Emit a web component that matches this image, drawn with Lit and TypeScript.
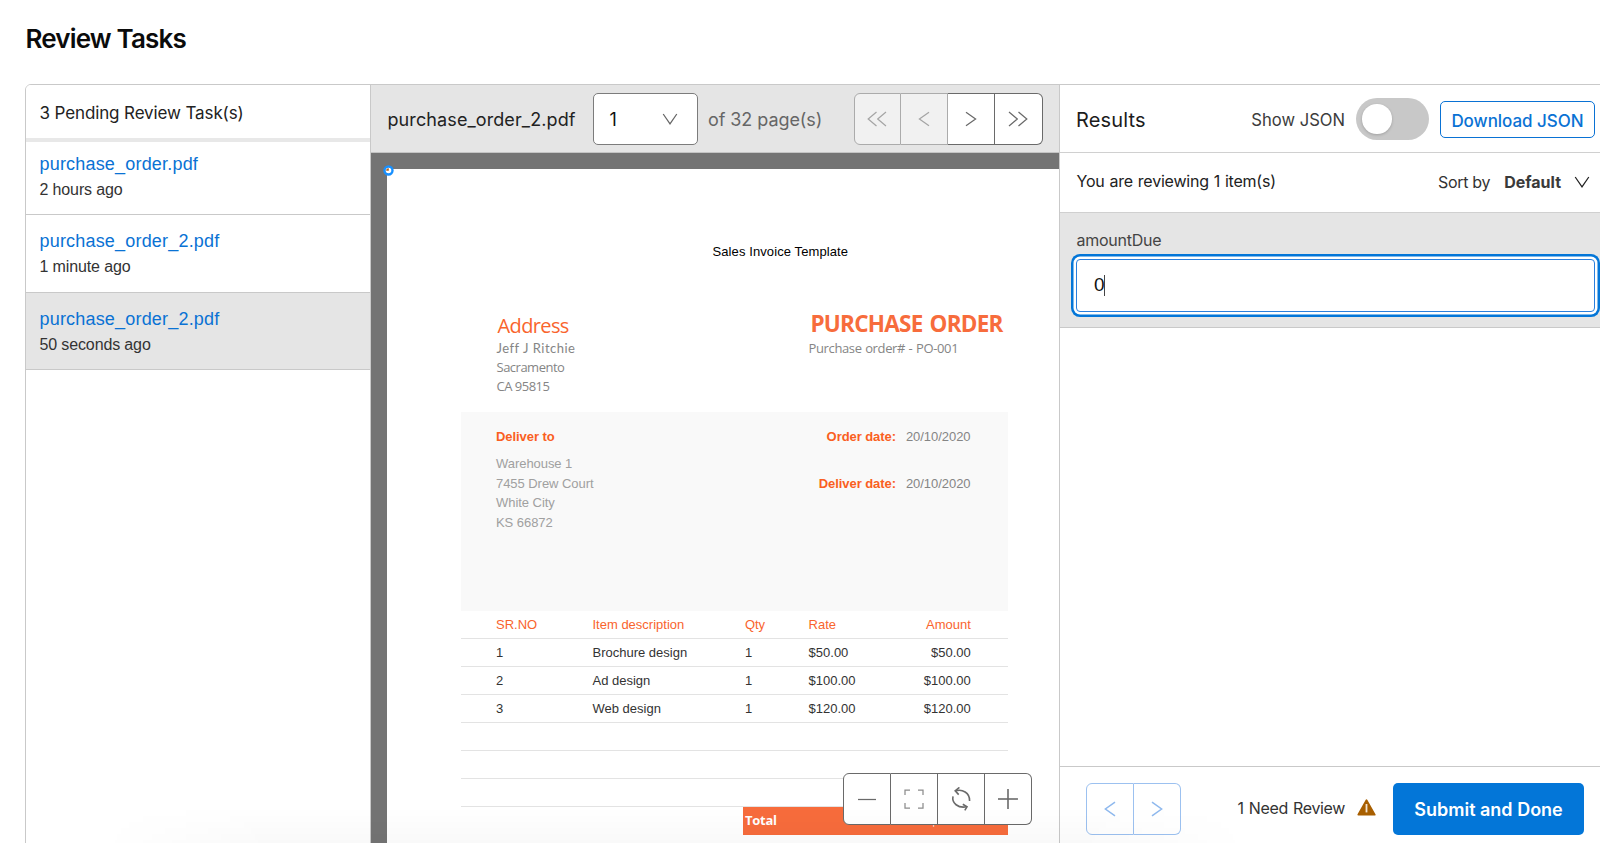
import { LitElement, html, css, svg } from "lit";
import { customElement, property, state } from "lit/decorators.js";
import { classMap } from "lit/directives/class-map.js";

const icon = (w: number, h: number, paths: string[], cls = "") => html`
  <svg class="icon ${cls}" width=${w} height=${h} viewBox="0 0 ${w} ${h}">
    ${paths.map((d) => svg`<path d=${d}></path>`)}
  </svg>`;

const ICONS = {
  first: () => icon(20, 16, ["M9.5 1 1.2 8 9.5 15", "M19 1 10.7 8 19 15"]),
  prev: () => icon(12, 16, ["M11 1.2 1.4 8 11 14.8"]),
  next: () => icon(12, 16, ["M1 1.2 10.6 8 1 14.8"]),
  last: () => icon(20, 16, ["M1 1 9.3 8 1 15", "M10.5 1 18.8 8 10.5 15"]),
  down: () => icon(16, 12, ["M1.2 1 8 10.8 14.8 1"]),
  minus: () => icon(20, 20, ["M1 10.5H19"]),
  fit: () => icon(20, 20, ["M1 6V1H6", "M14 1H19V6", "M19 14V19H14", "M6 19H1V14"], "light"),
  rotate: () =>
    icon(24, 24, [
      "M6.4 4C13 1.6 21 5.6 20.6 14",
      "M10.4.4 6.2 3.9 9.7 7.6",
      "M4 9.4C2.6 16 9 21.6 17.8 19.8",
      "M13.8 17.2 18 19.8 15.8 23.4",
    ], "bold"),
  plus: () => icon(20, 20, ["M0 10H20", "M10 0V20"], "bold"),
};

@customElement("task-list")
class TaskList extends LitElement {
  @property({ attribute: false }) tasks: { name: string; age: string; active: boolean }[] = [];

  static styles = css`
    :host { display: block; width: 345px; flex: none; border-right: 1px solid #c9c9c9; box-sizing: border-box; background: #fff; }
    .head { box-sizing: border-box; height: 57px; padding: 15px 0 0 13.5px; border-bottom: 4px solid #e8e8e8;
      font: 17px/27px Inter, sans-serif; letter-spacing: -0.12px; color: #222; }
    .task { box-sizing: border-box; height: 77.5px; padding: 14px 0 0 13.5px; border-bottom: 1px solid #c9c9c9;
      font-family: "Liberation Sans", sans-serif; line-height: 25px; }
    .task:nth-child(2) { height: 73px; padding-top: 10px; }
    .task.active { background: #e5e5e5; }
    .name { font-size: 18px; letter-spacing: 0.19px; color: #0a72d4; }
    .age { font-size: 16px; letter-spacing: -0.13px; color: #333; }
  `;

  render() {
    return html`
      <div class="head">${this.tasks.length} Pending Review Task(s)</div>
      ${this.tasks.map((t) => html`
        <div class=${classMap({ task: true, active: t.active })}>
          <div class="name">${t.name}</div>
          <div class="age">${t.age}</div>
        </div>`)}
    `;
  }
}

@customElement("order-document")
class OrderDocument extends LitElement {
  static styles = css`
    :host { display: block; box-sizing: border-box; height: 1000px; padding: 74px 0 0 74px; background: #fff;
      font: 13px/19.55px "Liberation Sans", sans-serif; color: #333; }
    .sheet { width: 547px; }
    .title { padding-left: 251.5px; line-height: 18px; letter-spacing: 0.1px; color: #000; }
    .top { display: flex; justify-content: space-between; height: 103px; margin-top: 48px;
      font-family: "Open Sans", sans-serif; line-height: 19px; color: #858585; }
    .from { padding: 3.5px 0 0 35.5px; }
    .from h3 { margin: 0; padding-left: 1px; font-size: 20px; line-height: 26px; font-weight: 400; letter-spacing: -0.62px; color: #f9642d; }
    .wide { font-family: Lato, sans-serif; letter-spacing: 0.5px; }
    .tight { letter-spacing: -0.5px; }
    .order { width: 199.5px; letter-spacing: -0.36px; word-spacing: 0.5px; }
    .order h2 { margin: 0; padding-left: 2px; font-size: 22.5px; line-height: 30px; font-weight: 700; letter-spacing: -0.76px; word-spacing: 2px; white-space: nowrap; color: #f76c3c; }
    .ship { display: flex; justify-content: space-between; box-sizing: border-box; height: 198.6px; padding: 15px 37.5px 0 35px; background: #f9f9f9; }
    .ship b { color: #fa5f22; letter-spacing: -0.07px; }
    .to { color: #a0a0a0; letter-spacing: -0.05px; }
    .to b { display: block; margin-bottom: 7.5px; }
    .dates { display: grid; grid-template-columns: auto auto; grid-auto-rows: 46.7px; column-gap: 10px; text-align: right; color: #858585; letter-spacing: -0.05px; }
    .row { display: grid; grid-template-columns: 96.5px 152.4px 63.7px 80px 1fr; box-sizing: border-box; height: 28.08px;
      padding: 4.6px 37.2px 0 35px; border-bottom: 1px solid #e3e3e3; }
    .row.head { color: #f9642d; }
    .row span:last-child { text-align: right; }
    .total { display: flex; justify-content: space-between; box-sizing: border-box; height: 28px; margin-left: 282px;
      padding: 4px 33px 0 2px; background: #f76c3c; color: #fff; font-family: "Open Sans", sans-serif; font-weight: 700; letter-spacing: -0.27px; }
    .sum { font-family: "Liberation Sans", sans-serif; }
  `;

  render() {
    const rows = [
      ["1", "Brochure design", "1", "$50.00", "$50.00"],
      ["2", "Ad design", "1", "$100.00", "$100.00"],
      ["3", "Web design", "1", "$120.00", "$120.00"],
      [], [], [],
    ];
    const line = (cells: string[], cls = "") => html`<div class="row ${cls}">${cells.map((c) => html`<span>${c}</span>`)}</div>`;
    return html`
      <div class="sheet">
        <div class="title">Sales Invoice Template</div>
        <div class="top">
          <div class="from">
            <h3>Address</h3>
            <div class="wide">Jeff J Ritchie</div>
            <div class="tight">Sacramento</div>
            <div class="tight">CA 95815</div>
          </div>
          <div class="order">
            <h2>PURCHASE ORDER</h2>
            <div>Purchase order# - PO-001</div>
          </div>
        </div>
        <div class="ship">
          <div class="to">
            <b>Deliver to</b>
            <div>Warehouse 1</div>
            <div>7455 Drew Court</div>
            <div>White City</div>
            <div>KS 66872</div>
          </div>
          <div class="dates">
            <b>Order date:</b><span>20/10/2020</span>
            <b>Deliver date:</b><span>20/10/2020</span>
          </div>
        </div>
        ${line(["SR.NO", "Item description", "Qty", "Rate", "Amount"], "head")}
        ${rows.map((r) => line(r))}
        <div class="total"><span>Total</span><span class="sum">$270.00</span></div>
      </div>
    `;
  }
}

@customElement("app-root")
class AppRoot extends LitElement {
  @state() tasks = [
    { name: "purchase_order.pdf", age: "2 hours ago", active: false },
    { name: "purchase_order_2.pdf", age: "1 minute ago", active: false },
    { name: "purchase_order_2.pdf", age: "50 seconds ago", active: true },
  ];

  static styles = css`
    :host { display: block; position: relative; box-sizing: border-box; width: 1600px; height: 843px; overflow: hidden; background: #fff;
      font-family: Inter, sans-serif; color: #222; }
    h1 { margin: 0; box-sizing: border-box; height: 84px; padding: 23px 0 0 25.5px; font-size: 26px; line-height: 32px; font-weight: 600; letter-spacing: -0.84px; color: #0b0b0b; }
    .frame { display: flex; box-sizing: border-box; width: 1600px; height: 780px; margin-left: 25px; border: 1px solid #c9c9c9; border-radius: 6px 0 0 0; overflow: hidden; }
    .icon { display: block; fill: none; stroke: currentColor; stroke-width: 1.25; }
    .icon.light { stroke: #8c8c8c; }
    .icon.bold { stroke-width: 1.6; }

    .viewer { position: relative; width: 688px; flex: none; display: flex; flex-direction: column; height: 758px; overflow: hidden; }
    .toolbar { display: flex; align-items: center; flex: none; box-sizing: border-box; height: 68px; padding: 1px 16.5px 0 16.5px; background: #e5e5e5; border-bottom: 1px solid #c4c4c4; }
    .file { width: 205px; font-size: 18px; letter-spacing: 0.1px; }
    .select { display: flex; align-items: center; justify-content: space-between; box-sizing: border-box; width: 105px; height: 52px; padding: 0 19px 0 16px;
      border: 1px solid #7c7c7c; border-radius: 5px; background: #fff; font-size: 18px; color: #111; }
    .select .icon { color: #666; }
    .pages { margin-left: 10.5px; font-size: 18px; letter-spacing: -0.07px; color: #666; }
    .group { display: flex; box-sizing: border-box; width: 189px; height: 52px; }
    .group div { flex: 1; display: flex; align-items: center; justify-content: center; box-sizing: border-box;
      border: 1px solid #6a6a6a; border-left-width: 0; background: #fff; color: #6a6a6a; }
    .group div:first-child { border-left-width: 1px; border-radius: 6px 0 0 6px; }
    .group div:last-child { border-radius: 0 6px 6px 0; }
    .group div.off { flex: none; width: 47px; border-color: #ababab; background: #f1f1f1; color: #a5a5a5; }
    .nav { margin-left: auto; }
    .canvas { flex: 1; box-sizing: border-box; padding: 16px 0 0 16px; background: #747474; overflow: hidden; }
    .marker { position: absolute; left: 11.5px; top: 80px; }
    .zoom { position: absolute; left: 472px; top: 688px; }

    .results { display: flex; flex-direction: column; width: 541px; flex: none; box-sizing: border-box; height: 758px; border-left: 1px solid #c9c9c9; background: #fff; }
    .bar { display: flex; align-items: center; flex: none; box-sizing: border-box; height: 68px; padding: 1px 5px 0 16px; border-bottom: 1px solid #d0d0d0; }
    .heading { flex: 1; padding-top: 1px; font-size: 20px; letter-spacing: 0.15px; color: #1c1c1c; }
    .show { padding-top: 1px; font-size: 16.6px; color: #3c3c3c; }
    .toggle { box-sizing: border-box; width: 73px; height: 42px; margin: 0 11px; padding: 6px; border-radius: 21px; background: #c8c8c8; }
    .knob { width: 29.5px; height: 29.5px; border-radius: 50%; background: #fff; box-shadow: 0 1px 3px rgba(0, 0, 0, 0.2); }
    .download { box-sizing: border-box; width: 155px; height: 37px; padding-top: 2px; border: 1px solid #0a72d4; border-radius: 5px; text-align: center;
      font-size: 17px; line-height: 34px; font-weight: 500; letter-spacing: -0.03px; color: #0a72d4; }
    .sub { display: flex; align-items: center; flex: none; box-sizing: border-box; height: 59.5px; padding: 0 10.5px 0 16.5px; border-bottom: 1px solid #d0d0d0; font-size: 16px; }
    .count { flex: 1; padding-bottom: 3px; letter-spacing: -0.21px; word-spacing: 0.6px; }
    .sort { letter-spacing: -0.3px; color: #333; }
    .sort-value { margin: 0 12.5px 0 14px; font-weight: 700; color: #3a3a3a; }
    .field { flex: none; box-sizing: border-box; height: 115.5px; padding: 17.5px 5px 0 16px; background: #e5e5e5; border-bottom: 1px solid #c9c9c9; }
    .label { padding-left: 0.5px; font-size: 16px; line-height: 20px; letter-spacing: -0.25px; color: #444; }
    .input { display: flex; align-items: center; box-sizing: border-box; height: 53px; margin-top: 8.5px; padding-left: 17px;
      border: 1px solid #2b7fdc; border-radius: 4px; background: #fff; box-shadow: 0 0 0 2.5px #fff, 0 0 0 5px #0376d8;
      font: 19px "Liberation Sans", sans-serif; color: #111; }
    .zero { width: 10px; }
    .caret { width: 1px; height: 21px; background: #444; }
    .foot { display: flex; align-items: center; box-sizing: border-box; height: 77px; margin-top: auto; padding: 8px 16px 0 26px; border-top: 1px solid #c9c9c9; }
    .group.step { width: 95px; }
    .group.step div { border-color: #9cc1f0; color: #8fb9ee; }
    .group.step .icon { stroke-width: 1.5; }
    .need { margin-left: auto; padding-bottom: 2px; font-size: 16px; letter-spacing: -0.35px; word-spacing: 1px; color: #333; }
    .warn { margin: 0 17px 4px 12px; display: block; }
    .submit { box-sizing: border-box; width: 191px; height: 52px; padding-top: 2px; border-radius: 5px; background: #0376d8; color: #fff; text-align: center;
      font-size: 18px; line-height: 50px; font-weight: 600; }
    .fade { position: absolute; left: 100px; right: 350px; bottom: 0; height: 36px; background: linear-gradient(transparent, rgba(0, 0, 0, 0.025));
      pointer-events: none; -webkit-mask-image: linear-gradient(90deg, transparent, #000 15%, #000 85%, transparent); }
  `;

  render() {
    return html`
      <h1>Review Tasks</h1>
      <div class="frame">
        <task-list .tasks=${this.tasks}></task-list>
        <section class="viewer">
          <div class="toolbar">
            <div class="file">purchase_order_2.pdf</div>
            <div class="select"><span>1</span>${ICONS.down()}</div>
            <div class="pages">of 32 page(s)</div>
            <div class="group nav">
              <div class="off">${ICONS.first()}</div>
              <div class="off">${ICONS.prev()}</div>
              <div>${ICONS.next()}</div>
              <div>${ICONS.last()}</div>
            </div>
          </div>
          <div class="canvas"><order-document></order-document></div>
          <svg class="marker" width="11" height="11" viewBox="0 0 11 11">
            <circle cx="5.5" cy="5.5" r="4" fill="#fff" stroke="#1890ff" stroke-width="2.4"></circle>
            <path d="M3.2 5.8A2.4 2.4 0 0 1 5.8 3.2V5.8Z" fill="#b8651b"></path>
          </svg>
          <div class="group zoom">
            <div>${ICONS.minus()}</div>
            <div>${ICONS.fit()}</div>
            <div>${ICONS.rotate()}</div>
            <div>${ICONS.plus()}</div>
          </div>
        </section>
        <section class="results">
          <div class="bar">
            <div class="heading">Results</div>
            <div class="show">Show JSON</div>
            <div class="toggle"><div class="knob"></div></div>
            <div class="download">Download JSON</div>
          </div>
          <div class="sub">
            <div class="count">You are reviewing 1 item(s)</div>
            <div class="sort">Sort by</div>
            <div class="sort-value">Default</div>
            ${ICONS.down()}
          </div>
          <div class="field">
            <div class="label">amountDue</div>
            <div class="input"><span class="zero">0</span><span class="caret"></span></div>
          </div>
          <div class="foot">
            <div class="group step"><div>${ICONS.prev()}</div><div>${ICONS.next()}</div></div>
            <div class="need">1 Need Review</div>
            <svg class="warn" width="19" height="17" viewBox="0 0 19 17">
              <path d="M9.5 1.2 17.7 15.6H1.3Z" fill="#a85f00" stroke="#a85f00" stroke-width="1.8" stroke-linejoin="round"></path>
              <path d="M9.5 5V13.4" stroke="#f3e3cf" stroke-width="1.8" fill="none"></path>
            </svg>
            <div class="submit">Submit and Done</div>
          </div>
        </section>
      </div>
      <div class="fade"></div>
    `;
  }
}
